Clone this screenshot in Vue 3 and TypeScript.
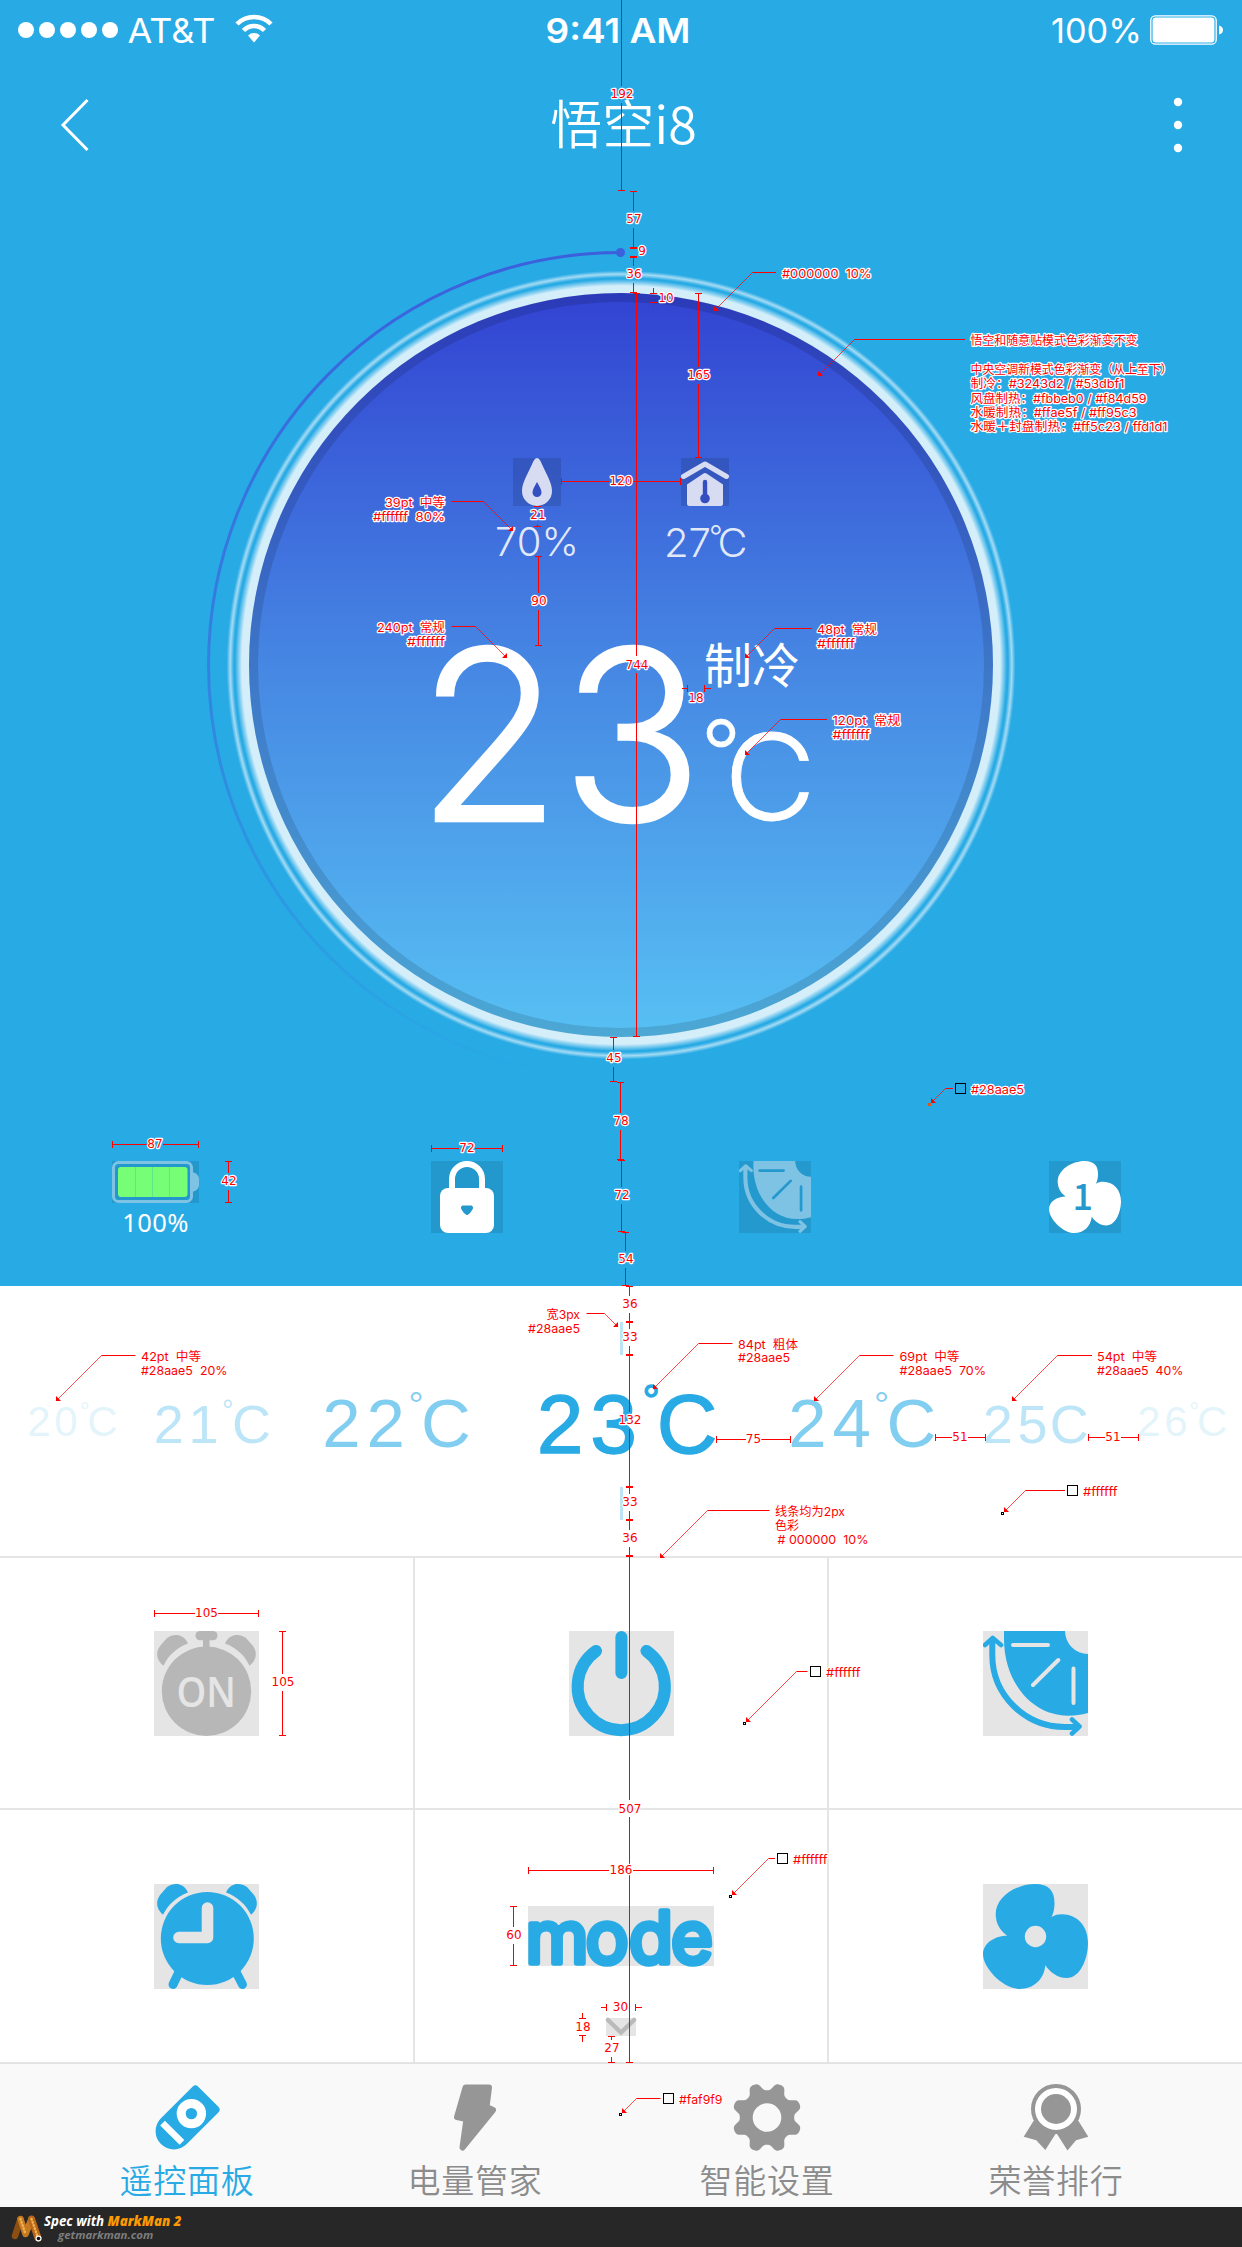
<script setup lang="ts">
interface Temp {
  digits: string
  degree: boolean
  left: number
  width: number
  size: number
  base: number
  cx: number
  dx: number
  dy: number
  dd: number
  opacity: number
  gap: number
  bold?: boolean
}

const temps: Temp[] = [
  { digits: '20', degree: true, left: 28.6, width: 88, size: 42, base: 1436, cx: 89, dx: 81, dy: 1402, dd: 7, opacity: 0.15, gap: 3.6 },
  { digits: '21', degree: true, left: 156, width: 114, size: 54, base: 1443, cx: 234.7, dx: 224, dy: 1399, dd: 8, opacity: 0.31, gap: 4.6 },
  { digits: '22', degree: true, left: 325, width: 145, size: 69, base: 1447, cx: 424.5, dx: 411, dy: 1390.5, dd: 10.5, opacity: 0.58, gap: 5.8 },
  { digits: '23', degree: true, left: 540, width: 176, size: 84, base: 1453, cx: 661, dx: 645.6, dy: 1384, dd: 12, opacity: 1, gap: 7, bold: true },
  { digits: '24', degree: true, left: 791, width: 144, size: 69, base: 1447, cx: 890, dx: 876.7, dy: 1390.5, dd: 10.5, opacity: 0.58, gap: 5.8 },
  { digits: '25', degree: false, left: 985, width: 103, size: 54, base: 1443, cx: 1052.5, dx: 0, dy: 0, dd: 8, opacity: 0.31, gap: 4.6 },
  { digits: '26', degree: true, left: 1139, width: 88, size: 42, base: 1436, cx: 1199, dx: 1191, dy: 1402, dd: 7, opacity: 0.15, gap: 3.6 },
]
const tempMargin = (i: number): number =>
  i === 0 ? temps[0].left : temps[i].left - temps[i - 1].left - temps[i - 1].width

interface Dim {
  dir: 'v' | 'h'
  at: number
  from: number
  to: number
  label: string
  lx: number
  ly: number
  outside?: boolean
  bare?: boolean
}
const v = (at: number, from: number, to: number, label: string, ly: number): Dim =>
  ({ dir: 'v', at, from, to, label, lx: at + 0.5, ly })
const h = (at: number, from: number, to: number, label: string, lx: number): Dim =>
  ({ dir: 'h', at, from, to, label, lx, ly: at })

const dims: Dim[] = [
  v(621.5, -1, 190.5, '192', 94.5),
  v(633.5, 191.5, 247.5, '57', 219),
  { dir: 'v', at: 633.5, from: 248, to: 256.5, label: '9', lx: 642, ly: 251.5, bare: true },
  v(633.5, 257.5, 292.5, '36', 274.5),
  v(636.5, 293.5, 1036.5, '744', 664.7),
  { dir: 'v', at: 653.5, from: 293.5, to: 302.5, label: '10', lx: 666, ly: 298, outside: true },
  v(698.5, 293.5, 457.5, '165', 375),
  h(481.5, 561.5, 680.5, '120', 621),
  v(537.5, 506.5, 526.5, '21', 515.5),
  v(538.5, 556.5, 645.5, '90', 601),
  { dir: 'h', at: 688.5, from: 687.5, to: 704.5, label: '18', lx: 696, ly: 698.5, outside: true },
  v(613.5, 1037.5, 1081.5, '45', 1058.5),
  v(620.5, 1082.5, 1159.5, '78', 1121),
  v(621.5, 1160.5, 1231.5, '72', 1195.5),
  v(625.5, 1232.5, 1285.5, '54', 1259),
  h(1144.5, 112.5, 198.5, '87', 155),
  v(228.5, 1161.5, 1202.5, '42', 1181.5),
  h(1148.5, 431.5, 502.5, '72', 467),
  v(629.5, 1286.5, 1321.5, '36', 1304),
  v(629.5, 1322.5, 1354.5, '33', 1337.5),
  v(629.5, 1355.5, 1486.5, '132', 1420.5),
  v(629.5, 1487.5, 1519.5, '33', 1502.5),
  v(629.5, 1520.5, 1555.5, '36', 1538),
  v(629.5, 1556.5, 2062.5, '507', 1808.7),
  h(1439.5, 716.5, 790.5, '75', 753.5),
  h(1437.5, 935.5, 985.5, '51', 960),
  h(1437.5, 1088.5, 1138.5, '51', 1113),
  h(1613.5, 154.5, 258.5, '105', 206.5),
  v(282.5, 1631.5, 1735.5, '105', 1682.5),
  h(1870.5, 528.5, 713.5, '186', 621),
  v(513.5, 1906.5, 1965.5, '60', 1935.5),
  { dir: 'h', at: 2007.5, from: 606.5, to: 635.5, label: '30', lx: 620.5, ly: 2007.5, outside: true },
  { dir: 'v', at: 582.5, from: 2018.5, to: 2035.5, label: '18', lx: 583, ly: 2027, outside: true },
  v(611.5, 2036.5, 2062.5, '27', 2048.5),
]

function dimPath(d: Dim): string {
  const t = 3.5
  const p = (a: number, b: number): string => (d.dir === 'v' ? `${a} ${b}` : `${b} ${a}`)
  const line = (a1: number, b1: number, a2: number, b2: number): string => `M${p(a1, b1)}L${p(a2, b2)}`
  let s = line(d.at - t, d.from, d.at + t, d.from) + line(d.at - t, d.to, d.at + t, d.to)
  if (d.bare) return s
  if (d.outside) {
    return s + line(d.at, d.from - 6, d.at, d.from) + line(d.at, d.to, d.at, d.to + 6)
  }
  const c = d.dir === 'v' ? d.ly : d.lx
  const g = d.dir === 'v' ? 8.5 : d.label.length * 3.85
  if (c - g > d.from) s += line(d.at, d.from, d.at, c - g)
  if (c + g < d.to) s += line(d.at, c + g, d.at, d.to)
  return s
}

interface NoteLine { t: string; y: number; w: number; dx?: number }
interface Note {
  end: number
  elbow: number
  y: number
  tip: [number, number]
  x: number
  right?: boolean
  swatch?: [number, string]
  dot?: string
  lines: NoteLine[]
}
const notes: Note[] = [
  { end: 776, elbow: 752.5, y: 272.5, tip: [714, 311], x: 782, lines: [{ t: '#000000  10%', y: 273.5, w: 89.5 }] },
  {
    end: 965, elbow: 854.5, y: 339.5, tip: [818, 376], x: 970.5, lines: [
      { t: '悟空和随意贴模式色彩渐变不变', y: 340.5, w: 167 },
      { t: '中央空调新模式色彩渐变（从上至下）', y: 369.3, w: 202 },
      { t: '制冷：#3243d2 / #53dbf1', y: 383.3, w: 154 },
      { t: '风盘制热：#fbbeb0 / #f84d59', y: 398.3, w: 176 },
      { t: '水暖制热：#ffae5f / #ff95c3', y: 412.3, w: 166 },
      { t: '水暖＋封盘制热：#ff5c23 / ffd1d1', y: 426.7, w: 197 },
    ],
  },
  { end: 451.5, elbow: 483.5, y: 501.5, tip: [513, 531], x: 445, right: true, lines: [{ t: '39pt  中等', y: 502.7, w: 60 }, { t: '#ffffff  80%', y: 516.5, w: 72 }] },
  { end: 451.5, elbow: 475.5, y: 626.5, tip: [507, 658], x: 445, right: true, lines: [{ t: '240pt  常规', y: 627.7, w: 68 }, { t: '#ffffff', y: 641.5, w: 38 }] },
  { end: 812, elbow: 774.5, y: 628.5, tip: [745, 658], x: 817, lines: [{ t: '48pt  常规', y: 629.7, w: 60 }, { t: '#ffffff', y: 643.5, w: 38 }] },
  { end: 827, elbow: 780.5, y: 719.5, tip: [745, 755], x: 832.5, lines: [{ t: '120pt  常规', y: 720.3, w: 68 }, { t: '#ffffff', y: 734.5, w: 37.5 }] },
  { end: 953, elbow: 945.5, y: 1088.5, tip: [931, 1103], x: 971, swatch: [955, '#28aae5'], dot: '#d7551a', lines: [{ t: '#28aae5', y: 1090, w: 53 }] },
  { end: 586.5, elbow: 604.5, y: 1313.5, tip: [618, 1327], x: 580, right: true, lines: [{ t: '宽3px', y: 1314.7, w: 33.5 }, { t: '#28aae5', y: 1328.5, w: 52 }] },
  { end: 135.5, elbow: 101.5, y: 1355.5, tip: [56, 1401], x: 141, lines: [{ t: '42pt  中等', y: 1356.7, w: 60 }, { t: '#28aae5  20%', y: 1370.5, w: 86.5 }] },
  { end: 732.5, elbow: 698.5, y: 1343.5, tip: [653, 1389], x: 738, lines: [{ t: '84pt  粗体', y: 1344.2, w: 60 }, { t: '#28aae5', y: 1358, w: 52 }] },
  { end: 893.5, elbow: 859.5, y: 1355.5, tip: [814, 1401], x: 899.5, lines: [{ t: '69pt  中等', y: 1356.7, w: 60 }, { t: '#28aae5  70%', y: 1370.5, w: 86.5 }] },
  { end: 1092, elbow: 1057.5, y: 1355.5, tip: [1012, 1401], x: 1097, lines: [{ t: '54pt  中等', y: 1356.7, w: 60 }, { t: '#28aae5  40%', y: 1370.5, w: 86.5 }] },
  { end: 1065, elbow: 1025.5, y: 1490.5, tip: [1004, 1512], x: 1083, swatch: [1067, '#ffffff'], dot: '#000', lines: [{ t: '#ffffff', y: 1491.7, w: 34.5 }] },
  { end: 769.5, elbow: 707.5, y: 1510.5, tip: [660, 1558], x: 775, lines: [{ t: '线条均为2px', y: 1511.7, w: 70 }, { t: '色彩', y: 1525.5, w: 24 }, { t: '# 000000  10%', y: 1540, w: 91, dx: 2.5 }] },
  { end: 807.5, elbow: 796.5, y: 1671.5, tip: [746, 1722], x: 826, swatch: [810, '#ffffff'], dot: '#000', lines: [{ t: '#ffffff', y: 1672.5, w: 34.5 }] },
  { end: 775, elbow: 768.5, y: 1858.5, tip: [732, 1895], x: 793, swatch: [777, '#ffffff'], dot: '#000', lines: [{ t: '#ffffff', y: 1859.7, w: 34.5 }] },
  { end: 660.5, elbow: 636.5, y: 2098.5, tip: [622, 2113], x: 679, swatch: [663, '#faf9f9'], dot: '#000', lines: [{ t: '#faf9f9', y: 2099.7, w: 43.5 }] },
]
function arrowHead(n: Note): string {
  const [x, y] = n.tip
  const s = n.elbow > x ? 1 : -1
  return `${x},${y} ${x},${y - 5} ${x + 5 * s},${y}`
}

const gear: string = (() => {
  const pts: string[] = []
  for (let i = 0; i < 240; i++) {
    const a = (i / 240) * Math.PI * 2
    const w = Math.cos(8 * (a - Math.PI / 8))
    const r = 31.2 + 4 * Math.tanh(w * 1.5) / Math.tanh(1.5)
    pts.push(`${(33 + r * Math.cos(a)).toFixed(2)} ${(33 + r * Math.sin(a)).toFixed(2)}`)
  }
  return `M${pts.join('L')}Z M47.3 33A14.3 14.3 0 1 0 18.7 33A14.3 14.3 0 1 0 47.3 33Z`
})()
</script>

<template>
  <div class="screen">
    <svg class="defs" width="0" height="0">
      <symbol id="vent" viewBox="0 0 105 105">
        <path d="M21 0H82A23 23 0 0 0 105 23V82C98 84 92 84.7 85 84.7C48 84.7 21 50 21 8Z" fill="currentColor" />
        <g fill="none" stroke="var(--cut)" stroke-width="4" stroke-linecap="round">
          <path d="M30 14H65M50 54L75.300 29M90.500 37.500V72" />
        </g>
        <g fill="none" stroke="currentColor" stroke-linecap="round" stroke-linejoin="round">
          <path d="M9.300 9V24C9.300 64 42 96 82 96H94" stroke-width="6" />
          <path d="M2 14L9.700 7L18 14M89 88.500L96.500 95.500L89 102.500" stroke-width="4.600" />
        </g>
      </symbol>
      <symbol id="fan" viewBox="0 0 105 105">
        <path
          d="M24.300 51.700C16 46 12.700 38 12.700 30C12.700 13 33 0 52 0C66 0 71.500 7 71.500 19C71.500 25 70.500 29 68.500 33C72 31 75 30.300 78.700 30.300C95 30.300 105 43 105 58.700C105 75 97 94 83.700 94C74 94 67 88 62.300 81.300C61 96 50 105 37 105C20 105 0 84 0 70.300C0 59 12 51.700 24.300 51.700Z"
          fill="currentColor"
        />
      </symbol>
    </svg>

    <section class="hero">
      <div class="statusbar">
        <div class="carrier">
          <svg width="102" height="18"><circle v-for="i in 5" :key="i" :cx="i * 21 - 13" cy="9" r="8" fill="#fff" /></svg>
          <svg width="88" height="36"><text x="-0.500" y="30.500" class="sys" textLength="88" lengthAdjust="spacingAndGlyphs">AT&amp;T</text></svg>
          <svg class="wifi" width="38" height="28" viewBox="0 0 38 28">
            <path d="M19 27.500L13 20.500A8.500 8.500 0 0 1 25 20.500Z" fill="#fff" />
            <path d="M8.500 15.500A14.500 14.500 0 0 1 29.500 15.500M2 9A24 24 0 0 1 36 9" fill="none" stroke="#fff" stroke-width="4.600" />
          </svg>
        </div>
        <svg class="time" width="144" height="36"><text x="-1.500" y="30.500" class="sys semi" textLength="145" lengthAdjust="spacingAndGlyphs">9:41 AM</text></svg>
        <div class="power">
          <svg width="92" height="36"><text x="0" y="30.500" class="sys" textLength="91" lengthAdjust="spacingAndGlyphs">100%</text></svg>
          <svg width="75" height="30" viewBox="0 0 75 30">
            <rect x="0.800" y="0.800" width="65.400" height="28.400" rx="4.500" fill="none" stroke="#fff" stroke-width="1.300" />
            <rect x="2.600" y="2.600" width="61.800" height="24.800" rx="3" fill="#fff" />
            <path d="M69 10.500Q73 11.500 73 15T69 19.500Z" fill="#fff" />
          </svg>
        </div>
      </div>

      <header class="nav">
        <svg width="30" height="54" viewBox="0 0 30 54"><path d="M27.500 2L3 27L27.500 52" fill="none" stroke="#fff" stroke-width="3" /></svg>
        <h1>悟空i8</h1>
        <svg width="10" height="56" viewBox="0 0 10 56"><circle v-for="i in 3" :key="i" cx="5" :cy="i * 23 - 18" r="4.200" fill="#fff" /></svg>
      </header>

      <svg class="dial" width="1242" height="969" viewBox="0 192 1242 969">
        <defs>
          <linearGradient id="face" x1="0" y1="0" x2="0" y2="1">
            <stop offset="0" stop-color="#3243d2" />
            <stop offset="0.500" stop-color="#4687e3" />
            <stop offset="1" stop-color="#57c0f3" />
          </linearGradient>
          <radialGradient id="halo" gradientUnits="userSpaceOnUse" cx="621" cy="665" r="400">
            <stop offset="0.948" stop-color="#fff" stop-opacity="0.800" />
            <stop offset="0.965" stop-color="#fff" stop-opacity="0" />
            <stop offset="0.968" stop-color="#fff" stop-opacity="0" />
            <stop offset="0.977" stop-color="#fff" stop-opacity="0.580" />
            <stop offset="0.986" stop-color="#fff" stop-opacity="0" />
          </radialGradient>
          <linearGradient id="trail" gradientUnits="userSpaceOnUse" x1="0" y1="252" x2="0" y2="1078">
            <stop offset="0" stop-color="#3b60dc" />
            <stop offset="0.450" stop-color="#3b60dc" stop-opacity="0.600" />
            <stop offset="1" stop-color="#3b60dc" stop-opacity="0" />
          </linearGradient>
        </defs>
        <path d="M621 252.500A412.500 412.500 0 0 0 621 1077.500" fill="none" stroke="url(#trail)" stroke-width="3" />
        <circle cx="620.500" cy="252.500" r="4.500" fill="#3b60dc" />
        <circle cx="621" cy="665" r="400" fill="url(#halo)" />
        <circle cx="621" cy="665" r="372" fill="url(#face)" />
        <circle cx="621" cy="665" r="367.500" fill="none" stroke="#000" stroke-opacity="0.120" stroke-width="9" />

        <g>
          <rect x="513" y="458" width="48" height="48" fill="#000" fill-opacity="0.120" />
          <path d="M537 458Q539 458 540.500 461C545 472 552 482 552 491A15 15 0 0 1 522 491C522 482 529 472 533.500 461Q535 458 537 458Z" fill="#d8dcf3" />
          <path d="M537 482C539 486 541.500 489 541.500 492.500A4.500 4.500 0 0 1 532.500 492.500C532.500 489 535 486 537 482Z" fill="#3450c0" />
        </g>
        <g transform="translate(681 458)">
          <rect width="48" height="48" fill="#000" fill-opacity="0.120" />
          <path d="M2.500 18.500L24 6L45.500 18.500" fill="none" stroke="#d8dcf3" stroke-width="5" stroke-linecap="round" stroke-linejoin="round" />
          <path d="M6 26.500L22.500 15.500Q24 14.500 25.500 15.500L42 26.500V45.500Q42 48 39.500 48H8.500Q6 48 6 45.500Z" fill="#d8dcf3" />
          <path d="M24 24V38" stroke="#3450c0" stroke-width="4.400" stroke-linecap="round" />
          <circle cx="24" cy="40.500" r="4.800" fill="#3450c0" />
        </g>
        <g class="light" fill="#fff" fill-opacity="0.860">
          <text x="495" y="556" font-size="39" textLength="84" lengthAdjust="spacingAndGlyphs">70%</text>
          <text x="664" y="557" font-size="39" textLength="47" lengthAdjust="spacingAndGlyphs">27</text>
          <text x="709" y="547" font-size="30">°</text>
          <text x="717.500" y="557" font-size="39" textLength="30" lengthAdjust="spacingAndGlyphs">C</text>
        </g>
        <g class="light" fill="#fff" stroke="#fff">
          <text x="417" y="820.500" font-size="238" stroke-width="2.400" textLength="286" lengthAdjust="spacingAndGlyphs">23</text>
          <text x="701" y="784" font-size="88" stroke-width="0.600">°</text>
          <text x="724" y="820" font-size="119" stroke-width="0.800" textLength="92" lengthAdjust="spacingAndGlyphs">C</text>
          <text x="704" y="683" font-size="48" stroke="none" class="cjk mid">制冷</text>
        </g>
      </svg>

      <div class="states">
        <div class="state">
          <svg width="87" height="42" viewBox="0 0 87 42">
            <rect width="87" height="42" fill="#000" fill-opacity="0.100" />
            <rect x="1.500" y="1.500" width="78" height="39" rx="5" fill="none" stroke="#7fc3e4" stroke-width="3" />
            <path d="M80.500 11Q87 13 87 18V24Q87 29 80.500 31Z" fill="#7fc3e4" />
            <rect x="6" y="6" width="69.500" height="30" rx="3" fill="#76ff76" />
            <path d="M23.500 6V36M40.500 6V36M57.500 6V36" stroke="#5fe687" stroke-width="1" />
          </svg>
          <span class="charge">100%</span>
        </div>
        <div class="state">
          <svg width="72" height="72" viewBox="0 0 72 72">
            <rect width="72" height="72" fill="#000" fill-opacity="0.100" />
            <path d="M21 30V18A15 15 0 0 1 51 18V30" fill="none" stroke="#fff" stroke-width="6" />
            <rect x="9" y="27" width="54" height="45" rx="8" fill="#fff" />
            <path d="M31.500 44.500H40.500Q43 46 41.500 48.500Q39 53 36.500 54H35.500Q33 53 30.500 48.500Q29 46 31.500 44.500Z" fill="#2598cd" />
          </svg>
        </div>
        <div class="state vent">
          <svg width="72" height="72"><rect width="72" height="72" fill="#2499ce" /><use href="#vent" width="72" height="72" /></svg>
        </div>
        <div class="state">
          <svg class="fan1" width="72" height="72">
            <rect width="72" height="72" fill="#2499ce" /><use href="#fan" width="72" height="72" />
            <text x="23.500" y="49" font-size="36" class="cjk speed" fill="#2499ce">1</text>
          </svg>
        </div>
      </div>
    </section>

    <section class="picker">
      <svg
        v-for="(t, i) in temps" :key="t.digits" height="270" :width="t.width"
        :viewBox="`${t.left} 1286 ${t.width} 270`" :style="{ marginLeft: `${tempMargin(i)}px` }"
        :class="['temp', { bold: t.bold }]" :fill-opacity="t.opacity"
      >
        <text :x="t.left - t.size * 0.04" :y="t.base" :font-size="t.size" :letter-spacing="t.gap">{{ t.digits }}</text>
        <text v-if="t.degree" :x="t.dx - t.dd * 0.25" :y="t.dy + t.dd * 2.6" :font-size="t.dd * 3.6">°</text>
        <text :x="t.cx - t.size * 0.05" :y="t.base" :font-size="t.size">C</text>
      </svg>
      <i class="mark top"></i>
      <i class="mark bottom"></i>
    </section>

    <section class="grid">
      <div class="cell">
        <svg width="105" height="105" viewBox="0 0 105 105" class="tile">
          <g fill="#b7b7b7">
            <circle cx="52.500" cy="60.200" r="44.700" />
            <rect x="41.500" width="22" height="9.200" rx="4.500" />
            <rect x="49" y="6" width="6.500" height="12" />
            <path d="M34 12.500C30 3 20 2 13 7L6 15C1 22 3 30 9.500 34.700C14 25 22 17 34 12.500Z" />
            <path d="M71 12.500C75 3 85 2 92 7L99 15C104 22 102 30 95.500 34.700C91 25 83 17 71 12.500Z" />
          </g>
          <text x="22.500" y="75.500" class="on" textLength="59.500" lengthAdjust="spacingAndGlyphs">ON</text>
        </svg>
      </div>
      <div class="cell">
        <svg width="105" height="105" viewBox="0 0 105 105" class="tile">
          <path d="M27 20A43.600 43.600 0 1 0 77.500 20M52.400 6V42" fill="none" stroke="#28aae5" stroke-width="12" stroke-linecap="round" />
        </svg>
      </div>
      <div class="cell"><svg width="105" height="105" class="tile swing"><use href="#vent" width="105" height="105" /></svg></div>
      <div class="cell">
        <svg width="105" height="105" viewBox="0 0 105 105" class="tile">
          <g fill="#28aae5">
            <circle cx="53.300" cy="54.500" r="46.500" />
            <path d="M34 8.500C30 -1 20 -2 13 3L6 11C1 18 3 26 9 30.700C14 21 22 13 34 8.500Z" />
            <path d="M72 8.500C76 -1 86 -2 93 3L100 11C105 18 103 26 97 30.700C92 21 84 13 72 8.500Z" />
          </g>
          <path d="M25 88L19 100.500M82 88L88.500 100.500" stroke="#28aae5" stroke-width="9" stroke-linecap="round" />
          <path d="M53.500 24V53.500H25" fill="none" stroke="#e5e5e5" stroke-width="11.600" stroke-linecap="round" stroke-linejoin="round" />
        </svg>
      </div>
      <div class="cell mode">
        <svg width="186" height="60" class="tile"><text x="-2.500 57.500 101 143" y="56.500" class="word">mode</text></svg>
        <svg width="30" height="18" viewBox="0 0 30 18" class="tile more"><path d="M2 2L15 14.500L28 2" fill="none" stroke="#bababa" stroke-width="4.500" stroke-linecap="round" /></svg>
      </div>
      <div class="cell">
        <svg width="105" height="105" class="tile swing"><use href="#fan" width="105" height="105" /><circle cx="52.500" cy="52.500" r="10.700" fill="#e5e5e5" /></svg>
      </div>
    </section>

    <nav class="tabs">
      <a class="tab active">
        <svg width="67" height="67" viewBox="0 0 66 66">
          <g transform="translate(33 33) rotate(45)">
            <path d="M-14 -29H14Q18 -29 18 -25V19A18 18 0 0 1 -18 19V-25Q-18 -29 -14 -29Z" fill="#28aae5" />
            <circle cy="-5.400" r="14.500" fill="#fff" /><circle cy="-5.400" r="5.600" fill="#28aae5" />
            <rect x="-13.500" y="18" width="27" height="6.500" fill="#fff" />
          </g>
        </svg>
        <span>遥控面板</span>
      </a>
      <a class="tab">
        <svg width="42" height="66" viewBox="0 0 42 66">
          <path d="M11.500 3H35L32.500 22.500L39 25.500L8.500 63L12.500 34.500L3 32.500Z" fill="#969696" stroke="#969696" stroke-width="6" stroke-linejoin="round" />
        </svg>
        <span>电量管家</span>
      </a>
      <a class="tab">
        <svg width="66" height="66" viewBox="0 0 66 66"><path :d="gear" fill="#969696" fill-rule="evenodd" /></svg>
        <span>智能设置</span>
      </a>
      <a class="tab">
        <svg width="66" height="67" viewBox="0 0 66 67">
          <path d="M10.500 37L0.700 52.700L13.300 56.300L22.300 66L32.500 50H34L44.500 66.500L53 56.300L65.300 52.700L55.500 37Z" fill="#969696" />
          <circle cx="33" cy="25" r="23" fill="#fff" stroke="#969696" stroke-width="4" /><circle cx="33" cy="25" r="15" fill="#969696" />
        </svg>
        <span>荣誉排行</span>
      </a>
    </nav>

    <footer class="credit">
      <svg width="33" height="30" viewBox="0 0 33 30">
        <g fill="none" stroke-linecap="round">
          <path d="M4 23L9.500 6" stroke="#8c4f12" stroke-width="6.500" />
          <path d="M9.500 6L14.500 21L20.500 6" stroke="#c57a22" stroke-width="6.500" stroke-linejoin="round" />
          <path d="M20.500 6L27 25" stroke="#b8671a" stroke-width="7" />
          <path d="M9.500 6L14.500 21M20.500 6L26 22" stroke="#f3b04e" stroke-width="2.500" stroke-dasharray="0.500 2.800" />
        </g>
        <circle cx="27.500" cy="25.500" r="3" fill="#fff" /><circle cx="27.500" cy="25.500" r="1.800" fill="#111" />
      </svg>
      <div class="by">
        <p class="l1">Spec with <b>MarkMan 2</b></p>
        <p class="l2">getmarkman.com</p>
      </div>
    </footer>

    <svg class="spec" width="1242" height="2247" viewBox="0 0 1242 2247">
      <g v-for="(n, i) in notes" :key="`n${i}`">
        <path :d="`M${n.end} ${n.y}H${n.elbow}`" stroke="#f00" fill="none" />
        <path :d="`M${n.elbow} ${n.y}L${n.tip[0]} ${n.tip[1]}`" stroke="#f00" stroke-width="0.700" fill="none" />
        <polygon :points="arrowHead(n)" fill="#f00" />
        <rect v-if="n.swatch" :x="n.swatch[0] + 0.500" :y="n.y - 5" width="10" height="10" :fill="n.swatch[1]" stroke="#000" />
        <rect v-if="n.dot" :x="n.tip[0] - 2.500" :y="n.tip[1] + 0.500" width="2" height="2" fill="none" :stroke="n.dot" />
        <text
          v-for="(l, k) in n.lines" :key="k" class="note" :x="(n.right ? n.x - l.w : n.x) + (l.dx ?? 0)" :y="l.y + 4.300"
          :textLength="l.w" lengthAdjust="spacingAndGlyphs"
        >{{ l.t }}</text>
      </g>
      <g v-for="(d, i) in dims" :key="`d${i}`">
        <path :d="dimPath(d)" stroke="#f00" fill="none" shape-rendering="crispEdges" />
        <text class="num" :x="d.lx" :y="Math.round(d.ly + 3.900)" text-anchor="middle">{{ d.label }}</text>
      </g>
    </svg>
  </div>
</template>

<style>
body { background: #fff; }
</style>

<style scoped>
.screen {
  position: relative;
  width: 1242px;
  height: 2247px;
  overflow: hidden;
  font-family: Inter, "Noto Sans CJK SC", sans-serif;
  display: flex;
  flex-direction: column;
}
svg { display: block; flex: none; overflow: visible; }
.defs { position: absolute; }
.hero { height: 1286px; background: #28aae5; color: #fff; }
.statusbar {
  height: 60px;
  box-sizing: border-box;
  padding: 0 17px 0 18px;
  display: grid;
  grid-template-columns: 529px 1fr auto;
  align-items: center;
}
.carrier, .power { display: flex; align-items: center; }
.carrier { gap: 8px; }
.wifi { margin-left: 11px; margin-bottom: 2px; }
.power { gap: 7px; }
.sys { font-size: 34.5px; fill: #fff; }
.sys.semi { font-weight: 600; }
.nav {
  height: 132px;
  box-sizing: border-box;
  padding: 0 59px 2px 60px;
  display: flex;
  align-items: center;
  justify-content: space-between;
}
.nav h1 {
  margin: -7px 0 0 -16px;
  font: 350 52px/60px "Noto Sans CJK SC", sans-serif;
}
.light { font-weight: 300; }
.cjk { font-family: "Noto Sans CJK SC", sans-serif; }
.mid { font-weight: 400; }
.speed { font-weight: 500; }
.states { display: grid; grid-template-columns: 311px 312px 304px 315px; }
.state { display: flex; flex-direction: column; align-items: center; }
.state.vent { color: #7fc3e4; --cut: #2499ce; }
.fan1 { color: #fff; }
.charge { font: 400 25.5px/30px "Noto Sans", sans-serif; margin-top: 4px; letter-spacing: 0.4px; }
.picker { position: relative; height: 270px; display: flex; background: #fff; }
.temp { font-family: "Liberation Sans", sans-serif; fill: #28aae5; }
.temp.bold { stroke: #28aae5; stroke-width: 1.3px; }
.mark { position: absolute; left: 620px; width: 3px; height: 33px; background: #bce4f7; }
.mark.top { top: 36px; }
.mark.bottom { bottom: 36px; }
.grid {
  height: 507px;
  display: grid;
  grid-template-columns: 413px 412px 413px;
  grid-template-rows: 250px 252px;
  gap: 2px;
  padding-top: 2px;
  box-sizing: border-box;
  background: #e5e5e5;
}
.cell { display: flex; align-items: center; justify-content: center; background: #fff; }
.tile { background: #e5e5e5; }
.swing { color: #28aae5; --cut: #e5e5e5; }
.mode { flex-direction: column; justify-content: flex-start; padding-top: 96px; }
.more { margin-top: 52px; }
.on { font: 600 41px "Open Sans", sans-serif; fill: #e5e5e5; }
.word { font: 400 72px Inter, sans-serif; fill: #28aae5; stroke: #28aae5; stroke-width: 5.5px; stroke-linejoin: round; }
.tabs {
  height: 144px;
  box-sizing: border-box;
  padding: 20px 46px 0 42px;
  background: #faf9f9;
  border-top: 1px solid #e2e2e2;
  display: grid;
  grid-template-columns: 290px 286px 298px 280px;
}
.tab { display: flex; flex-direction: column; align-items: center; color: #8c8c8c; }
.tab svg { height: 67px; }
.tab span { font: 350 33px/48px "Noto Sans CJK SC", sans-serif; letter-spacing: 0.7px; margin-top: 4px; }
.tab.active { color: #28aae5; }
.credit { height: 40px; background: #272727; display: flex; align-items: flex-start; padding: 6px 0 0 11px; box-sizing: border-box; }
.by { font-family: "Open Sans", sans-serif; font-style: italic; font-weight: 700; }
.by p { margin: 0; white-space: nowrap; }
.l1 { font-size: 13.3px; line-height: 15px; color: #fff; margin-top: 1px !important; }
.l1 b { color: #f90; }
.l2 { font-size: 11.4px; line-height: 12px; color: #7d7d7d; padding-left: 14px; }
.spec { position: absolute; left: 0; top: 0; pointer-events: none; }
.note, .num { fill: #f00; stroke: #fff; stroke-width: 2.4px; paint-order: stroke; stroke-linejoin: round; white-space: pre; }
.note { font: 12px Inter, "Noto Sans CJK SC", sans-serif; }
.num { font: 12px "DejaVu Sans", sans-serif; }
</style>
